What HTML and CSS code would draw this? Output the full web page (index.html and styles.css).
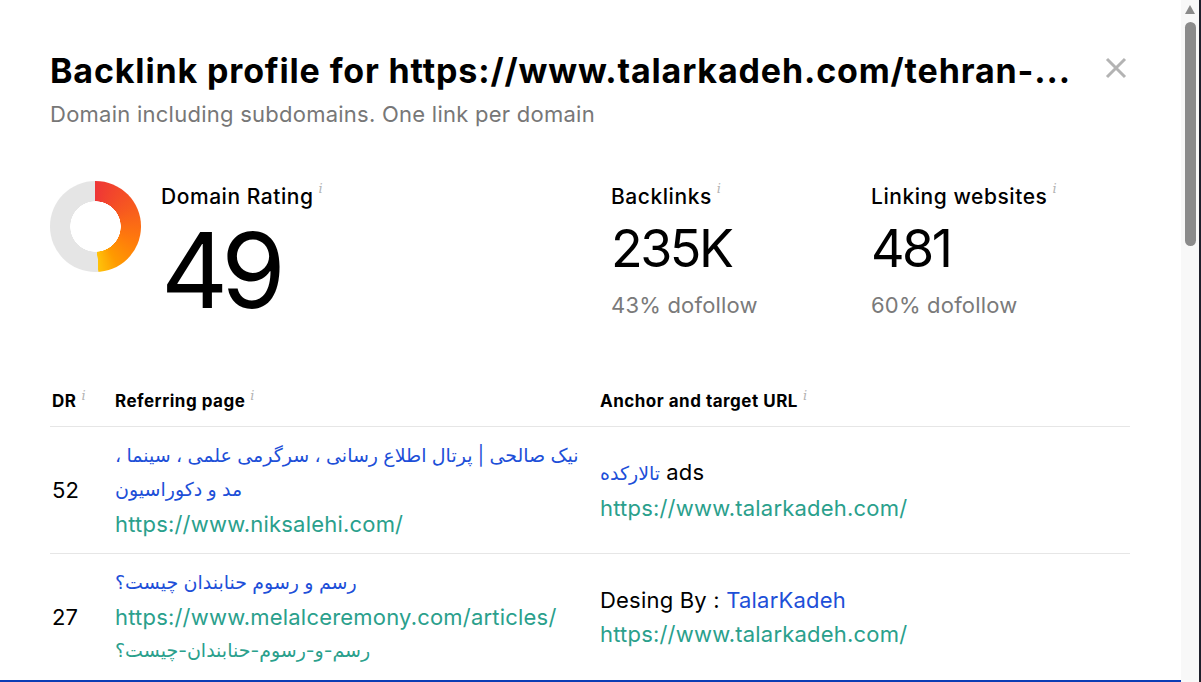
FILE: index.html
```html
<!DOCTYPE html>
<html lang="en">
<head>
<meta charset="utf-8">
<title>Backlink profile</title>
<link rel="stylesheet" href="styles.css">
</head>
<body>
<div class="screen">
  <div class="main">
    <div class="modal">
      <header class="head">
        <div class="titles">
          <h1 class="title">Backlink profile for https://www.talarkadeh.com/tehran-...</h1>
          <p class="subtitle">Domain including subdomains. One link per domain</p>
        </div>
        <button class="close" aria-label="Close">
          <svg width="22" height="22" viewBox="0 0 22 22"><path d="M2 2 L20 20 M20 2 L2 20" stroke="#b3b3b3" stroke-width="3" fill="none"/></svg>
        </button>
      </header>

      <section class="stats">
        <div class="stat stat-dr">
          <div class="donut"></div>
          <div class="stat-body">
            <div class="stat-label">Domain Rating<span class="info">i</span></div>
            <div class="dr-value">49</div>
          </div>
        </div>
        <div class="stat">
          <div class="stat-label">Backlinks<span class="info">i</span></div>
          <div class="stat-value">235K</div>
          <div class="stat-sub">43% dofollow</div>
        </div>
        <div class="stat">
          <div class="stat-label">Linking websites<span class="info">i</span></div>
          <div class="stat-value">481</div>
          <div class="stat-sub">60% dofollow</div>
        </div>
      </section>

      <table class="table">
        <thead>
          <tr>
            <th class="col-dr">DR<span class="info">i</span></th>
            <th class="col-ref">Referring page<span class="info">i</span></th>
            <th class="col-anchor">Anchor and target URL<span class="info">i</span></th>
          </tr>
        </thead>
        <tbody>
          <tr>
            <td class="col-dr">52</td>
            <td class="col-ref">
              <div class="page-title">نیک صالحی | پرتال اطلاع رسانی ، سرگرمی علمی ، سینما ، مد و دکوراسیون</div>
              <div class="url">https://www.niksalehi.com/</div>
            </td>
            <td class="col-anchor">
              <div class="anchor"><span class="anchor-link fa">تالارکده</span> ads</div>
              <div class="url">https://www.talarkadeh.com/</div>
            </td>
          </tr>
          <tr>
            <td class="col-dr">27</td>
            <td class="col-ref">
              <div class="page-title">رسم و رسوم حنابندان چیست؟</div>
              <div class="url">https://www.melalceremony.com/articles/<span class="fa url-tail">رسم-و-رسوم-حنابندان-چیست؟</span></div>
            </td>
            <td class="col-anchor">
              <div class="anchor">Desing By : <span class="anchor-link">TalarKadeh</span></div>
              <div class="url">https://www.talarkadeh.com/</div>
            </td>
          </tr>
        </tbody>
      </table>
    </div>
    <div class="focus-bar"></div>
  </div>
  <div class="scrollbar">
    <div class="scroll-arrow"></div>
    <div class="scroll-thumb"></div>
  </div>
  <div class="edge"></div>
</div>
</body>
</html>
```

FILE: styles.css
```css
* { box-sizing: border-box; }
html, body { margin: 0; padding: 0; }
body {
  width: 1201px;
  height: 682px;
  overflow: hidden;
  background: #ffffff;
  font-family: "Inter", "Noto Sans", "DejaVu Sans", sans-serif;
  color: #111;
}
.screen {
  display: flex;
  width: 1201px;
  height: 682px;
}
.main {
  width: 1181px;
  height: 682px;
  display: flex;
  flex-direction: column;
  overflow: hidden;
}
.modal {
  flex: 1;
  overflow: hidden;
  padding: 50px 51px 0 50px;
}
.focus-bar {
  height: 2px;
  background: #0b3db5;
  flex: none;
}
.scrollbar {
  width: 18px;
  height: 682px;
  background: #f8f8f8;
  display: flex;
  flex-direction: column;
  align-items: center;
  padding-top: 5px;
}
.scroll-arrow {
  width: 0;
  height: 0;
  border-left: 5.5px solid transparent;
  border-right: 5.5px solid transparent;
  border-bottom: 9px solid #8a8a8a;
}
.scroll-thumb {
  margin-top: 8px;
  width: 11px;
  height: 224px;
  border-radius: 6px;
  background: #8b8b8b;
}
.edge {
  width: 2px;
  background: #1e1f2b;
}

/* header */
.head {
  display: flex;
  justify-content: space-between;
  align-items: flex-start;
}
.title {
  margin: 0;
  font-size: 34px;
  line-height: 42px;
  font-weight: 700;
  color: #000;
  letter-spacing: 0.85px;
  white-space: nowrap;
}
.subtitle {
  margin: 8px 0 0;
  font-size: 22px;
  line-height: 28px;
  color: #777;
  font-weight: 400;
  letter-spacing: 0.25px;
}
.close {
  margin: 7px 3px 0 0;
  padding: 0;
  border: 0;
  background: none;
  width: 22px;
  height: 22px;
  display: block;
}
.close svg { display: block; }

/* stats */
.stats {
  margin-top: 53px;
  display: grid;
  grid-template-columns: 561px 260px 1fr;
}
.stat-dr {
  display: flex;
  gap: 20px;
}
.donut {
  width: 91px;
  height: 91px;
  border-radius: 50%;
  flex: none;
  background:
    radial-gradient(circle, #fff 0 25px, transparent 25.5px),
    conic-gradient(#ee3636 0deg, #f7591f 60deg, #ff7a0c 110deg, #ff9a00 150deg, #ffc20a 176deg, #e5e5e5 176.5deg, #e5e5e5 360deg);
}
.stat-label {
  margin-top: 3px;
  font-size: 21px;
  line-height: 26px;
  color: #000;
  font-weight: 500;
  letter-spacing: 0.55px;
}
.info {
  font-family: "DejaVu Serif", "Liberation Serif", serif;
  font-style: italic;
  font-weight: 400;
  font-size: 13px;
  color: #b3b3b3;
  vertical-align: top;
  line-height: 12px;
  margin-left: 5px;
  letter-spacing: 0;
  position: relative;
  top: -1px;
}
.dr-value {
  margin-top: 8px;
  font-size: 104px;
  line-height: 104px;
  font-weight: 400;
  color: #000;
  letter-spacing: -7px;
}
.stat-value {
  margin-top: 13px;
  font-size: 52px;
  line-height: 52px;
  color: #000;
  letter-spacing: -2.5px;
}
.stat-sub {
  margin-top: 17px;
  font-size: 22px;
  line-height: 26px;
  color: #7a7a7a;
  letter-spacing: 0.2px;
}

/* table */
.table {
  margin-top: 69px;
  width: 100%;
  border-collapse: collapse;
  table-layout: fixed;
}
.table th {
  text-align: left;
  font-size: 17px;
  line-height: 20px;
  font-weight: 700;
  color: #000;
  padding: 0 0 15px;
  border-bottom: 1px solid #e6e6e6;
  letter-spacing: 0.5px;
}
.table td {
  padding: 12px 0;
  border-bottom: 1px solid #e6e6e6;
  vertical-align: middle;
  font-size: 22px;
  line-height: 34px;
  letter-spacing: 0.2px;
}
.col-dr { width: 65px; padding-left: 2px !important; }
.col-ref { width: 485px; padding-right: 14px !important; }
.table td.col-dr { color: #000; }
.page-title {
  color: #1d4fd8;
  font-size: 19px;
  letter-spacing: 0;
}
.fa { font-size: 19px; letter-spacing: 0; }
.url-tail { display: block; }
.url { color: #2aa08c; }
.anchor { color: #000; }
.anchor-link { color: #1d4fd8; }
```
